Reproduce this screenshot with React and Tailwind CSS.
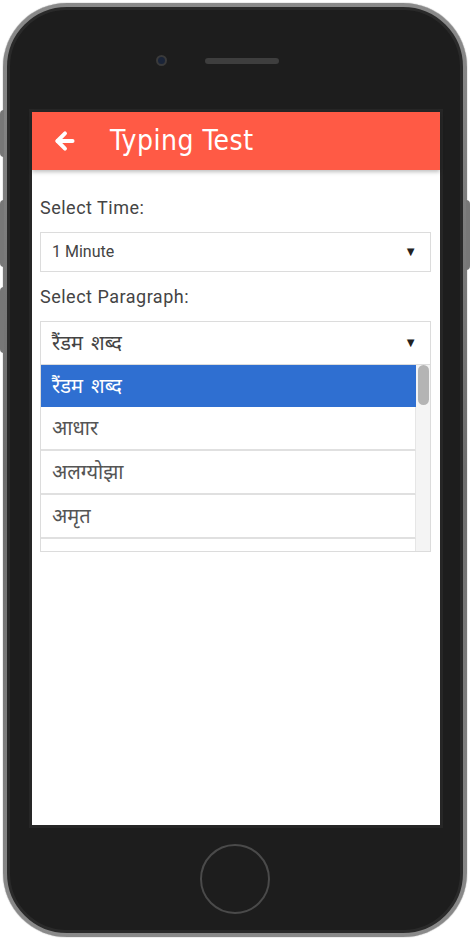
import { ArrowLeft } from "lucide-react";

const paragraphs = ["रैंडम  शब्द", "आधार", "अलग्योझा", "अमृत", ""];

const deva = { fontFamily: "'Noto Sans Devanagari', 'Noto Sans', sans-serif", wordSpacing: "3px" };

function Phone({ children }) {
  return (
    <div className="relative w-[464px] h-[934px] ml-[3px] mt-[3px] rounded-[64px] bg-gradient-to-b from-[#8a8a8a] via-[#6d6d6d] to-[#8a8a8a] p-[4px] shadow-[0_0_1px_#555]">
      {/* side buttons */}
      <div className="absolute -left-[3px] top-[107px] w-[4px] h-[47px] rounded-l bg-[#777]"></div>
      <div className="absolute -left-[3px] top-[197px] w-[4px] h-[67px] rounded-l bg-[#777]"></div>
      <div className="absolute -left-[3px] top-[284px] w-[4px] h-[66px] rounded-l bg-[#777]"></div>
      <div className="absolute -right-[3px] top-[197px] w-[4px] h-[70px] rounded-r bg-[#777]"></div>
      <div className="w-full h-full rounded-[60px] bg-[#1d1d1d] border-[3px] border-[#2a2a2a] flex flex-col">
        <div className="h-[102px] flex items-start">
          <div className="ml-[146px] mt-[45px] w-[11px] h-[11px] rounded-full bg-[#1a2438] border-2 border-[#3a3a3a]"></div>
          <div className="ml-[38px] mt-[48px] w-[74px] h-[6px] rounded-full bg-[#3e3e3e]"></div>
        </div>
        <div className="ml-[22px] w-[408px] h-[713px] bg-white outline-[3px] outline-[#262626]">{children}</div>
        <div className="flex-1 flex items-center justify-center">
          <div className="w-[70px] h-[70px] rounded-full border-2 border-[#4a4a4a] mt-[2px]"></div>
        </div>
      </div>
    </div>
  );
}

function Caret() {
  return <span className="text-[13px] text-[#222] mr-[13px]">▼</span>;
}

export default function App() {
  return (
    <div className="w-[470px] h-[940px] bg-white overflow-hidden" style={{ fontFamily: "Roboto, 'Noto Sans', sans-serif" }}>
      <Phone>
        <div className="h-[58px] bg-[#ff5a45] flex items-center shadow-[0_2px_4px_rgba(0,0,0,0.25)] relative">
          <ArrowLeft className="ml-[20px] text-white" size={26} strokeWidth={3.6} />
          <span className="ml-[32px] text-white text-[28px] tracking-[0.5px]" style={{ fontFamily: "'DejaVu Sans Condensed', 'Liberation Sans', sans-serif" }}>
            Typing Test
          </span>
        </div>
        <div className="pl-[8px] pr-[9px] pt-[27px]">
          <div className="text-[18px] text-[#444] leading-[22px] tracking-[0.5px]">Select Time:</div>
          <div className="mt-[13px] h-[40px] border border-[#dcdcdc] flex items-center justify-between pl-[11px]">
            <span className="text-[16px] text-[#444]">1 Minute</span>
            <Caret />
          </div>
          <div className="mt-[14px] text-[18px] text-[#444] leading-[22px] tracking-[0.5px]">Select Paragraph:</div>
          <div className="mt-[13px] h-[44px] border border-[#dcdcdc] flex items-center justify-between pl-[11px]">
            <span className="text-[20px] text-[#444] pt-[4px]" style={deva}>
              {paragraphs[0]}
            </span>
            <Caret />
          </div>
          <div className="h-[187px] border border-t-0 border-[#dcdcdc] flex overflow-hidden">
            <div className="flex-1 flex flex-col" style={deva}>
              {paragraphs.map((p, i) => (
                <div
                  key={i}
                  className={
                    i === 0
                      ? "h-[42px] shrink-0 bg-[#2f6fd1] text-white text-[20px] flex items-center pl-[11px] pt-[4px]"
                      : "h-[44px] shrink-0 border-b-2 border-[#e0e0e0] border-r border-r-[#e6e6e6] text-[#555] text-[20px] flex items-center pl-[11px] pt-[4px]"
                  }
                >
                  {p}
                </div>
              ))}
            </div>
            <div className="w-[14px] bg-[#f4f4f4] flex justify-center">
              <div className="w-[11px] h-[40px] rounded-full bg-[#b4b4b4]"></div>
            </div>
          </div>
        </div>
      </Phone>
    </div>
  );
}
